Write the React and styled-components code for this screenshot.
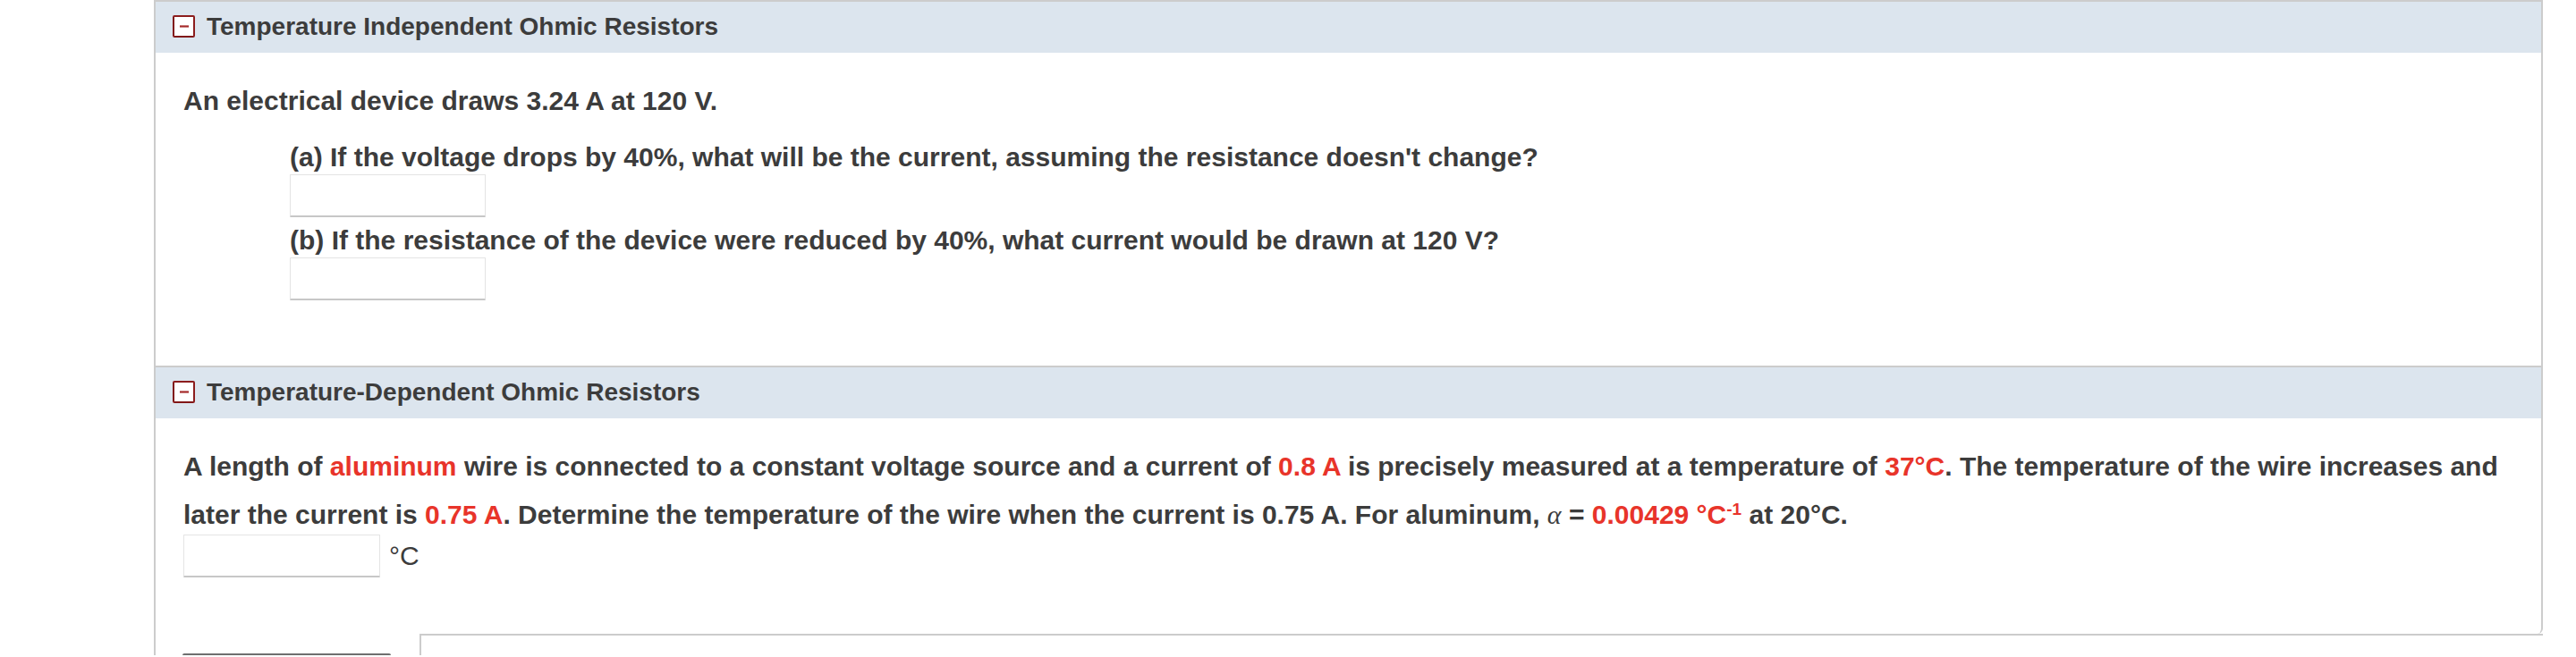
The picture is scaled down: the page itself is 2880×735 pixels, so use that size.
import React from 'react';
import styled, { createGlobalStyle } from 'styled-components';

const GlobalStyle = createGlobalStyle`
  html, body {
    margin: 0;
    padding: 0;
    background: #ffffff;
    overflow: hidden;
  }
  body {
    font-family: "Liberation Sans", Arial, Helvetica, sans-serif;
    color: #3c3c3c;
  }
`;

const Page = styled.div`
  padding-left: 172px;
`;

const Wrapper = styled.div`
  width: 2671px;
  box-sizing: border-box;
  border-left: 2px solid #cccccc;
  border-top: 2px solid #cccccc;
`;

const Card = styled.div`
  border-right: 2px solid #cccccc;
  border-bottom-right-radius: 6px;
`;

const SectionHeader = styled.div`
  display: flex;
  align-items: center;
  height: 57px;
  padding: 0 0 2px 19px;
  box-sizing: border-box;
  background: #dce5ee;
  border-top: ${({ $divider }) => ($divider ? '2px solid #cccccc' : 'none')};
  ${({ $divider }) => $divider && 'height: 59px;'}
`;

const ToggleIcon = styled.svg`
  width: 25px;
  height: 25px;
  flex-shrink: 0;
  margin-right: 13px;
`;

const SectionTitle = styled.h2`
  margin: 0;
  font-size: 28px;
  font-weight: 700;
  color: #3c3c3c;
  white-space: nowrap;
`;

const SectionBody = styled.div`
  padding: ${({ $top }) => $top}px 30px ${({ $bottom }) => $bottom}px 31px;
`;

const Para = styled.p`
  margin: 0;
  font-size: 30px;
  font-weight: 700;
  line-height: 45px;
  white-space: nowrap;
`;

const Hl = styled.span`
  color: #e8342a;
`;

const Alpha = styled.span`
  font-family: "Liberation Serif", "Times New Roman", serif;
  font-style: italic;
  font-weight: 400;
`;

const Sup = styled.sup`
  font-size: 19px;
  vertical-align: 10px;
  line-height: 51px;
`;

const QuestionList = styled.div`
  margin: 22px 0 0 119px;
  display: flex;
  flex-direction: column;
  gap: 7px;
`;

const Question = styled.div`
  display: flex;
  flex-direction: column;
  align-items: flex-start;
`;

const QuestionLabel = styled.div`
  font-size: 30px;
  font-weight: 700;
  line-height: 38px;
  white-space: nowrap;
`;

const AnswerBox = styled.input`
  width: ${({ $w }) => $w}px;
  height: 48px;
  box-sizing: border-box;
  border: 1px solid #e4e4e4;
  border-bottom: 2px solid #c7c7c7;
  border-radius: 1px;
  background: #ffffff;
  margin: 0;
  padding: 0 10px;
  font-size: 28px;
  outline: none;
`;

const AnswerRow = styled.div`
  display: flex;
  align-items: center;
  gap: 10px;
`;

const Unit = styled.span`
  font-size: 30px;
  font-weight: 400;
  line-height: 48px;
`;

const Footer = styled.div`
  display: flex;
  height: 24px;
  overflow: visible;
`;

const FooterLeft = styled.div`
  width: 295px;
  flex-shrink: 0;
  padding: 22px 0 0 30px;
  box-sizing: border-box;
`;

const SubmitBar = styled.div`
  width: 233px;
  height: 40px;
  background: #6f6f6f;
  border-radius: 2px 2px 0 0;
`;

const FooterBox = styled.div`
  flex: 1;
  height: 40px;
  border-top: 2px solid #cccccc;
  border-left: 2px solid #cccccc;
`;

const Toggle = () => (
  <ToggleIcon viewBox="0 0 25 25">
    <rect x="1" y="1" width="23" height="23" rx="1" fill="#ffffff" stroke="#8c1d1d" strokeWidth="2" />
    <line x1="1" y1="2" x2="1" y2="23" stroke="#7a1515" strokeWidth="1.2" />
    <line x1="2" y1="24" x2="23" y2="24" stroke="#7a1515" strokeWidth="1.2" />
    <line x1="8" y1="12.5" x2="18" y2="12.5" stroke="#a52a2a" strokeWidth="2.2" />
  </ToggleIcon>
);

const App = () => {
  return (
    <Page>
      <GlobalStyle />
      <Wrapper>
        <Card>
          <SectionHeader>
            <Toggle />
            <SectionTitle>Temperature Independent Ohmic Resistors</SectionTitle>
          </SectionHeader>
          <SectionBody $top={31} $bottom={73}>
            <Para>An electrical device draws 3.24 A at 120 V.</Para>
            <QuestionList>
              <Question>
                <QuestionLabel>
                  (a) If the voltage drops by 40%, what will be the current, assuming the resistance doesn't change?
                </QuestionLabel>
                <AnswerBox $w={219} />
              </Question>
              <Question>
                <QuestionLabel>
                  (b) If the resistance of the device were reduced by 40%, what current would be drawn at 120 V?
                </QuestionLabel>
                <AnswerBox $w={219} />
              </Question>
            </QuestionList>
          </SectionBody>

          <SectionHeader $divider>
            <Toggle />
            <SectionTitle>Temperature-Dependent Ohmic Resistors</SectionTitle>
          </SectionHeader>
          <SectionBody $top={31} $bottom={63}>
            <Para>
              A length of <Hl>aluminum</Hl> wire is connected to a constant voltage source and a current of{' '}
              <Hl>0.8 A</Hl> is precisely measured at a temperature of <Hl>37°C</Hl>. The temperature of the wire
              increases and
              <br />
              later the current is <Hl>0.75 A</Hl>. Determine the temperature of the wire when the current is 0.75 A.
              For aluminum, <Alpha>α</Alpha> = <Hl>0.00429 °C<Sup>-1</Sup></Hl> at 20°C.
            </Para>
            <AnswerRow>
              <AnswerBox $w={220} />
              <Unit>°C</Unit>
            </AnswerRow>
          </SectionBody>
        </Card>
        <Footer>
          <FooterLeft>
            <SubmitBar />
          </FooterLeft>
          <FooterBox />
        </Footer>
      </Wrapper>
    </Page>
  );
};

export default App;
